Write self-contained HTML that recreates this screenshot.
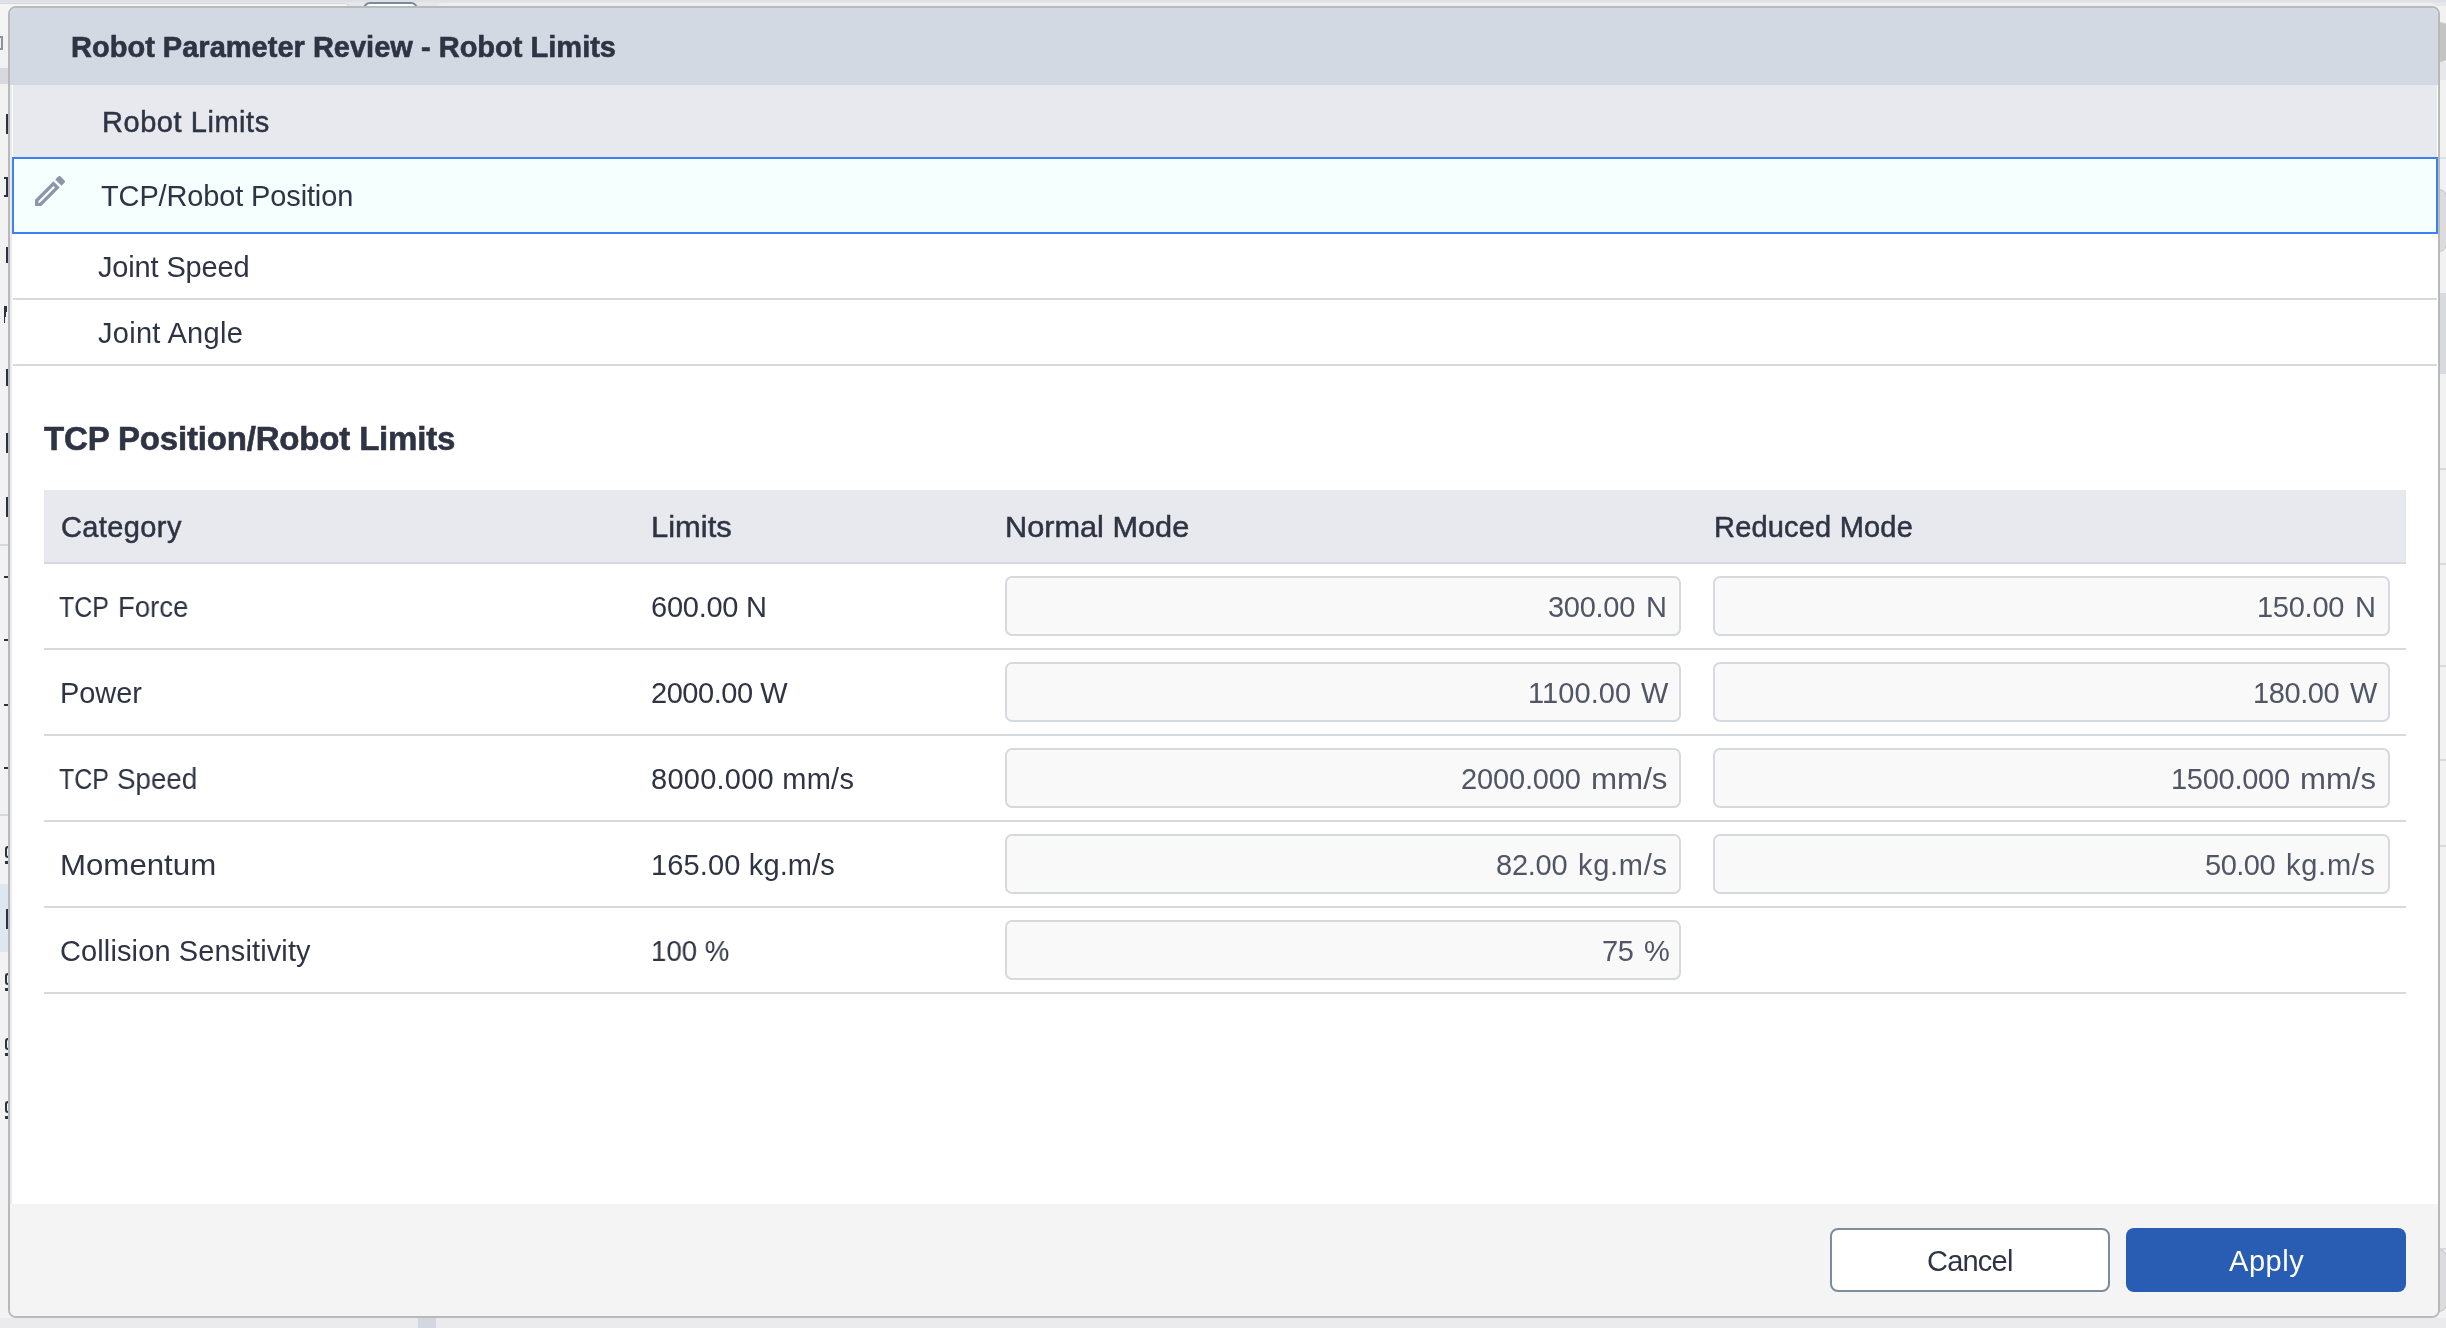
<!DOCTYPE html>
<html><head><meta charset="utf-8"><style>
html,body{margin:0;padding:0}
body{width:2446px;height:1328px;overflow:hidden;position:relative;background:#f2f2f2;font-family:"Liberation Sans",sans-serif}
.b{position:absolute;box-sizing:content-box}
.t{position:absolute;white-space:pre;will-change:transform}
.inp{border:2px solid #d6dade;border-radius:7px;background:#f9f9f9}
#dlg{position:absolute;left:8px;top:6px;width:2428px;height:1308px;border:2px solid #b9b9b9;border-radius:8px;overflow:hidden;background:#fff}
#in{position:absolute;left:-10px;top:-8px;width:2446px;height:1328px}
</style></head><body>
<div class="b" style="left:0px;top:0px;width:2446px;height:2px;background:#dde1e5"></div><div class="b" style="left:0px;top:2px;width:2446px;height:4px;background:#e5e7eb"></div><div class="b" style="left:0px;top:6px;width:8px;height:1322px;background:#f2f2f2"></div><div class="b" style="left:2440px;top:6px;width:6px;height:1322px;background:#f2f2f2"></div><div class="b" style="left:0px;top:1318px;width:2446px;height:10px;background:#ebebed"></div><div class="b" style="left:-20px;top:3px;width:368px;height:30px;border:1px solid #d3d6da;border-bottom:none;border-radius:6px 6px 0 0;background:#f4f4f4"></div><div class="b" style="left:363px;top:2px;width:51px;height:12px;border:2px solid #7a8a9b;border-radius:7px;background:#fff"></div><div class="b" style="left:437px;top:3px;width:2000px;height:12px;border-radius:6px;background:#eceef1"></div><div class="b" style="left:0px;top:68px;width:8px;height:16px;background:#d6d9dd"></div><div class="b" style="left:0px;top:36px;width:3px;height:14px;border:2px solid #8a90a8;border-left:none;box-sizing:border-box"></div><div class="b" style="left:6px;top:114px;width:2px;height:20px;background:#2b3241"></div><div class="b" style="left:6px;top:247px;width:2px;height:16px;background:#2b3241"></div><div class="b" style="left:6px;top:369px;width:2px;height:17px;background:#2b3241"></div><div class="b" style="left:6px;top:433px;width:2px;height:20px;background:#2b3241"></div><div class="b" style="left:6px;top:497px;width:2px;height:20px;background:#2b3241"></div><div class="b" style="left:6px;top:909px;width:2px;height:20px;background:#2b3241"></div><div class="b" style="left:4px;top:177px;width:4px;height:20px;border:2px solid #2b3241;border-left:none;box-sizing:border-box"></div><div class="b" style="left:4px;top:306px;width:4px;height:17px;background:linear-gradient(100deg,#2b3241 50%,transparent 50%)"></div><div class="b" style="left:0px;top:544px;width:8px;height:2px;background:#d6d9dd"></div><div class="b" style="left:0px;top:814px;width:8px;height:2px;background:#d6d9dd"></div><div class="b" style="left:0px;top:884px;width:8px;height:68px;background:#dde7f0"></div><div class="b" style="left:6px;top:909px;width:2px;height:20px;background:#2b3241"></div><div class="b" style="left:4px;top:576px;width:4px;height:2px;background:#2b3241"></div><div class="b" style="left:4px;top:639px;width:4px;height:2px;background:#2b3241"></div><div class="b" style="left:4px;top:704px;width:4px;height:2px;background:#2b3241"></div><div class="b" style="left:4px;top:767px;width:4px;height:2px;background:#2b3241"></div><div class="b" style="left:5px;top:846px;width:3px;height:12px;border-radius:6px 0 0 6px;border:2px solid #2b3241;border-right:none;box-sizing:border-box"></div><div class="b" style="left:5px;top:861px;width:3px;height:3px;background:#2b3241"></div><div class="b" style="left:5px;top:973px;width:3px;height:12px;border-radius:6px 0 0 6px;border:2px solid #2b3241;border-right:none;box-sizing:border-box"></div><div class="b" style="left:5px;top:988px;width:3px;height:3px;background:#2b3241"></div><div class="b" style="left:5px;top:1038px;width:3px;height:12px;border-radius:6px 0 0 6px;border:2px solid #2b3241;border-right:none;box-sizing:border-box"></div><div class="b" style="left:5px;top:1053px;width:3px;height:3px;background:#2b3241"></div><div class="b" style="left:5px;top:1101px;width:3px;height:12px;border-radius:6px 0 0 6px;border:2px solid #2b3241;border-right:none;box-sizing:border-box"></div><div class="b" style="left:5px;top:1116px;width:3px;height:3px;background:#2b3241"></div><div class="b" style="left:2300px;top:22px;width:158px;height:40px;border-radius:20px;background:#c4c4c4"></div><div class="b" style="left:2440px;top:62px;width:6px;height:18px;background:#e6e8eb"></div><div class="b" style="left:2440px;top:157px;width:6px;height:2px;background:#dcdfe3"></div><div class="b" style="left:2400px;top:189px;width:45px;height:61px;border-radius:8px;border:1px solid #c6c6c6;background:#dcdcdf"></div><div class="b" style="left:2440px;top:293px;width:6px;height:81px;background:#d9dadf"></div><div class="b" style="left:2440px;top:468px;width:6px;height:2px;background:#d6d9dd"></div><div class="b" style="left:2440px;top:563px;width:6px;height:2px;background:#d6d9dd"></div><div class="b" style="left:2440px;top:665px;width:6px;height:2px;background:#d6d9dd"></div><div class="b" style="left:2440px;top:759px;width:6px;height:2px;background:#d6d9dd"></div><div class="b" style="left:2440px;top:845px;width:6px;height:2px;background:#d6d9dd"></div><div class="b" style="left:2440px;top:1248px;width:6px;height:2px;background:#d6d9dd"></div><div class="b" style="left:2400px;top:1249px;width:45px;height:61px;border-radius:8px;border:1px solid #c6c6c6;background:#dcdcdf"></div><div class="b" style="left:418px;top:1318px;width:18px;height:10px;background:#d3d7df"></div>
<div id="dlg"><div id="in">
<div class="b" style="left:10px;top:8px;width:2428px;height:77px;background:#d3d9e2"></div>
<div class="b" style="left:10px;top:85px;width:2px;height:1119px;background:#e9ebf0"></div>
<div class="b" style="left:13px;top:85px;width:2424px;height:72px;background:#e8e9ee"></div>
<div class="b" style="left:12px;top:157px;width:2422px;height:73px;border:2px solid #3a82f2;box-shadow:inset 0 0 0 1px #fff;background:#f4fffe"></div>
<div class="b" style="left:13px;top:298px;width:2424px;height:2px;background:#d6dade"></div>
<div class="b" style="left:13px;top:364px;width:2424px;height:2px;background:#d6dade"></div>
<div class="b" style="left:44px;top:490px;width:2362px;height:72px;background:#e8e9ee"></div>
<div class="b" style="left:44px;top:562px;width:2362px;height:2px;background:#d6dade"></div>
<div class="b" style="left:44px;top:648px;width:2362px;height:2px;background:#d6dade"></div>
<div class="b" style="left:44px;top:734px;width:2362px;height:2px;background:#d6dade"></div>
<div class="b" style="left:44px;top:820px;width:2362px;height:2px;background:#d6dade"></div>
<div class="b" style="left:44px;top:906px;width:2362px;height:2px;background:#d6dade"></div>
<div class="b" style="left:44px;top:992px;width:2362px;height:2px;background:#d6dade"></div>
<div class="b inp" style="left:1005px;top:576px;width:672px;height:56px"></div>
<div class="b inp" style="left:1713px;top:576px;width:673px;height:56px"></div>
<div class="b inp" style="left:1005px;top:662px;width:672px;height:56px"></div>
<div class="b inp" style="left:1713px;top:662px;width:673px;height:56px"></div>
<div class="b inp" style="left:1005px;top:748px;width:672px;height:56px"></div>
<div class="b inp" style="left:1713px;top:748px;width:673px;height:56px"></div>
<div class="b inp" style="left:1005px;top:834px;width:672px;height:56px"></div>
<div class="b inp" style="left:1713px;top:834px;width:673px;height:56px"></div>
<div class="b inp" style="left:1005px;top:920px;width:672px;height:56px"></div>
<div class="b" style="left:10px;top:1204px;width:2428px;height:112px;background:#f4f4f4"></div>
<div class="b" style="left:1830px;top:1228px;width:276px;height:60px;border:2px solid #7c8c9c;border-radius:8px;background:#fff"></div>
<div class="b" style="left:2126px;top:1228px;width:280px;height:64px;border-radius:8px;background:#285db3"></div>
<svg class="b" style="left:30px;top:171px" width="40" height="40" viewBox="0 0 24 24"><path fill="#8e95ab" d="M3 17.25V21h3.75L17.81 9.94l-3.75-3.75L3 17.25zM5.92 19H5v-.92l9.06-9.06.92.92L5.92 19zM20.71 5.63l-2.34-2.34c-.2-.2-.45-.29-.71-.29s-.51.1-.7.29l-1.83 1.83 3.75 3.75 1.83-1.83c.39-.39.39-1.02 0-1.41z"/></svg>
<div class="t" style="left:71.0px;top:33px;font-size:29px;line-height:29px;font-weight:700;letter-spacing:0.01px;color:#2e3443;-webkit-text-stroke:0.6px #2e3443;">Robot Parameter Review - Robot Limits</div>
<div class="t" style="left:101.9px;top:108px;font-size:29px;line-height:29px;font-weight:400;letter-spacing:0.55px;color:#2e3443;-webkit-text-stroke:0.5px #2e3443;">Robot Limits</div>
<div class="t" style="left:101.3px;top:182px;font-size:29px;line-height:29px;font-weight:400;letter-spacing:-0.14px;color:#2e3443;">TCP/Robot Position</div>
<div class="t" style="left:98.3px;top:253px;font-size:29px;line-height:29px;font-weight:400;letter-spacing:-0.15px;color:#2e3443;">Joint Speed</div>
<div class="t" style="left:98.3px;top:319px;font-size:29px;line-height:29px;font-weight:400;letter-spacing:0.29px;color:#2e3443;">Joint Angle</div>
<div class="t" style="left:44.4px;top:422px;font-size:33px;line-height:33px;font-weight:700;letter-spacing:-0.17px;color:#2e3443;-webkit-text-stroke:0.6px #2e3443;">TCP Position/Robot Limits</div>
<div class="t" style="left:60.5px;top:513px;font-size:29px;line-height:29px;font-weight:400;letter-spacing:0.39px;color:#2e3443;-webkit-text-stroke:0.5px #2e3443;">Category</div>
<div class="t" style="left:650.9px;top:513px;font-size:29px;line-height:29px;font-weight:400;letter-spacing:0.0px;color:#2e3443;-webkit-text-stroke:0.5px #2e3443;transform:scaleX(1.0658);transform-origin:0 0;">Limits</div>
<div class="t" style="left:1004.9px;top:513px;font-size:29px;line-height:29px;font-weight:400;letter-spacing:0.0px;color:#2e3443;-webkit-text-stroke:0.5px #2e3443;transform:scaleX(1.0585);transform-origin:0 0;">Normal Mode</div>
<div class="t" style="left:1713.5px;top:513px;font-size:29px;line-height:29px;font-weight:400;letter-spacing:0.19px;color:#2e3443;-webkit-text-stroke:0.5px #2e3443;">Reduced Mode</div>
<div class="t" style="left:59.3px;top:593px;font-size:29px;line-height:29px;font-weight:400;letter-spacing:0.0px;color:#2e3443;transform:scaleX(0.8589);transform-origin:0 0;">TCP</div>
<div class="t" style="left:117.5px;top:593px;font-size:29px;line-height:29px;font-weight:400;letter-spacing:0.0px;color:#2e3443;transform:scaleX(0.9493);transform-origin:0 0;">Force</div>
<div class="t" style="left:60.0px;top:679px;font-size:29px;line-height:29px;font-weight:400;letter-spacing:-0.08px;color:#2e3443;">Power</div>
<div class="t" style="left:59.3px;top:765px;font-size:29px;line-height:29px;font-weight:400;letter-spacing:0.0px;color:#2e3443;transform:scaleX(0.8589);transform-origin:0 0;">TCP</div>
<div class="t" style="left:117.2px;top:765px;font-size:29px;line-height:29px;font-weight:400;letter-spacing:0.0px;color:#2e3443;transform:scaleX(0.9568);transform-origin:0 0;">Speed</div>
<div class="t" style="left:59.6px;top:851px;font-size:29px;line-height:29px;font-weight:400;letter-spacing:0.0px;color:#2e3443;transform:scaleX(1.0766);transform-origin:0 0;">Momentum</div>
<div class="t" style="left:60.3px;top:937px;font-size:29px;line-height:29px;font-weight:400;letter-spacing:0.12px;color:#2e3443;">Collision Sensitivity</div>
<div class="t" style="left:650.8px;top:593px;font-size:29px;line-height:29px;font-weight:400;letter-spacing:-0.24px;color:#2e3443;">600.00 N</div>
<div class="t" style="left:650.5px;top:679px;font-size:29px;line-height:29px;font-weight:400;letter-spacing:-0.45px;color:#2e3443;">2000.00 W</div>
<div class="t" style="left:650.8px;top:765px;font-size:29px;line-height:29px;font-weight:400;letter-spacing:0.25px;color:#2e3443;">8000.000 mm/s</div>
<div class="t" style="left:651.0px;top:851px;font-size:29px;line-height:29px;font-weight:400;letter-spacing:0.14px;color:#2e3443;">165.00 kg.m/s</div>
<div class="t" style="left:651.1px;top:937px;font-size:29px;line-height:29px;font-weight:400;letter-spacing:0.0px;color:#2e3443;transform:scaleX(0.9519);transform-origin:0 0;">100 %</div>
<div class="t" style="left:1548.4px;top:593px;font-size:29px;line-height:29px;font-weight:400;letter-spacing:-0.28px;color:#505665;">300.00</div>
<div class="t" style="left:1646.1px;top:593px;font-size:29px;line-height:29px;font-weight:400;letter-spacing:0.0px;color:#505665;">N</div>
<div class="t" style="left:1527.8px;top:679px;font-size:29px;line-height:29px;font-weight:400;letter-spacing:0.07px;color:#505665;">1100.00</div>
<div class="t" style="left:1641.0px;top:679px;font-size:29px;line-height:29px;font-weight:400;letter-spacing:0.0px;color:#505665;">W</div>
<div class="t" style="left:1461.2px;top:765px;font-size:29px;line-height:29px;font-weight:400;letter-spacing:-0.14px;color:#505665;">2000.000</div>
<div class="t" style="left:1590.7px;top:765px;font-size:29px;line-height:29px;font-weight:400;letter-spacing:0.0px;color:#505665;transform:scaleX(1.0794);transform-origin:0 0;">mm/s</div>
<div class="t" style="left:1495.8px;top:851px;font-size:29px;line-height:29px;font-weight:400;letter-spacing:-0.25px;color:#505665;">82.00</div>
<div class="t" style="left:1577.8px;top:851px;font-size:29px;line-height:29px;font-weight:400;letter-spacing:0.72px;color:#505665;">kg.m/s</div>
<div class="t" style="left:1602.1px;top:937px;font-size:29px;line-height:29px;font-weight:400;letter-spacing:-0.4px;color:#505665;">75</div>
<div class="t" style="left:1644.0px;top:937px;font-size:29px;line-height:29px;font-weight:400;letter-spacing:0.0px;color:#505665;">%</div>
<div class="t" style="left:2257.2px;top:593px;font-size:29px;line-height:29px;font-weight:400;letter-spacing:-0.26px;color:#505665;">150.00</div>
<div class="t" style="left:2355.0px;top:593px;font-size:29px;line-height:29px;font-weight:400;letter-spacing:0.0px;color:#505665;">N</div>
<div class="t" style="left:2252.7px;top:679px;font-size:29px;line-height:29px;font-weight:400;letter-spacing:-0.4px;color:#505665;">180.00</div>
<div class="t" style="left:2350.0px;top:679px;font-size:29px;line-height:29px;font-weight:400;letter-spacing:0.0px;color:#505665;">W</div>
<div class="t" style="left:2170.7px;top:765px;font-size:29px;line-height:29px;font-weight:400;letter-spacing:-0.27px;color:#505665;">1500.000</div>
<div class="t" style="left:2299.9px;top:765px;font-size:29px;line-height:29px;font-weight:400;letter-spacing:0.0px;color:#505665;transform:scaleX(1.0721);transform-origin:0 0;">mm/s</div>
<div class="t" style="left:2204.9px;top:851px;font-size:29px;line-height:29px;font-weight:400;letter-spacing:-0.48px;color:#505665;">50.00</div>
<div class="t" style="left:2286.1px;top:851px;font-size:29px;line-height:29px;font-weight:400;letter-spacing:0.74px;color:#505665;">kg.m/s</div>
<div class="t" style="left:1926.9px;top:1247px;font-size:29px;line-height:29px;font-weight:400;letter-spacing:-0.78px;color:#2e3443;">Cancel</div>
<div class="t" style="left:2228.7px;top:1247px;font-size:29px;line-height:29px;font-weight:400;letter-spacing:0.55px;color:#ffffff;">Apply</div>
</div></div>
</body></html>
